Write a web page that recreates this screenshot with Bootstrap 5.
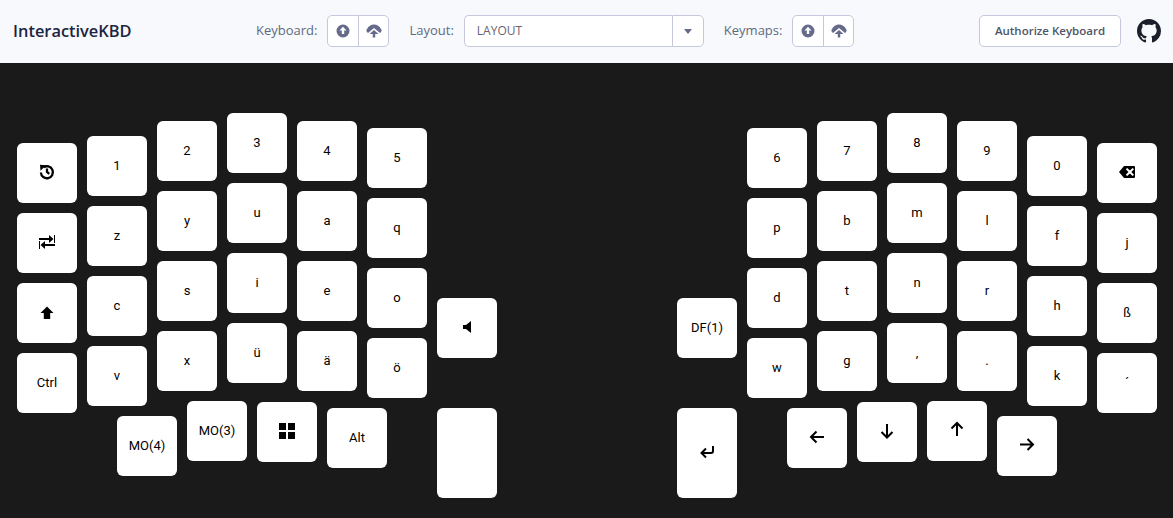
<!DOCTYPE html>
<html lang="en">
<head>
    <meta charset="UTF-8">
    <meta name="viewport" content="width=device-width, initial-scale=1.0">
    <title>InteractiveKBD</title>
    <link href="https://cdn.jsdelivr.net/npm/bootstrap@5.3.0/dist/css/bootstrap.min.css" rel="stylesheet">
    <style>
        body {
            background-color: #1a1a1a;
            height: 518px;
            overflow: hidden;
            font-family: "Open Sans", sans-serif;
        }

        /* Top bar */
        .top-bar {
            height: 63px;
            background-color: #f8f9fc;
            padding: 0 12px 1px 13px;
        }

        .brand-name {
            width: 243px;
            font-size: 16.4px;
            font-weight: 600;
            color: #1b2440;
        }

        .field-label {
            font-size: 13px;
            color: #5f6a80;
            margin-right: 10px;
        }

        .tool-group {
            height: 32px;
            margin-right: 20px;
        }

        .tool-btn {
            width: 31.5px;
            height: 32px;
            padding: 0;
            background-color: #fff;
            border: 1px solid #c5c8dc;
            border-radius: 5px;
            display: flex;
            align-items: center;
            justify-content: center;
        }

        .tool-btn svg {
            width: 24px;
            height: 24px;
            fill: #666b8c;
        }

        .layout-box {
            width: 240px;
            height: 32px;
            margin-right: 20px;
        }

        .layout-text {
            flex: 1;
            height: 32px;
            font-size: 12px;
            color: #6b6470;
            padding: 0 12px;
            line-height: 30px;
            background-color: #fff;
            border: 1px solid #c5c8dc;
            border-right: 0;
            border-radius: 5px 0 0 5px;
        }

        .layout-caret {
            width: 32px;
            border-radius: 0 5px 5px 0;
        }

        .layout-caret span {
            border-top: 5px solid #666b8c;
            border-left: 4.5px solid transparent;
            border-right: 4.5px solid transparent;
        }

        .auth-btn {
            width: 142px;
            height: 32px;
            padding: 0;
            font-size: 11.5px;
            font-weight: 600;
            color: #4d5568;
            background-color: #fff;
            border: 1px solid #c5c8dc;
            border-radius: 5px;
        }

        .gh-link {
            margin-left: 16px;
            line-height: 0;
        }

        .gh-link svg {
            width: 24px;
            height: 24px;
            fill: #1b1f2a;
        }

        /* Keyboard canvas */
        .key-canvas {
            position: relative;
            height: 455px;
        }

        .kbd-key {
            position: absolute;
            width: 60px;
            height: 60px;
            background-color: #fff;
            border-radius: 6px;
            display: flex;
            align-items: center;
            justify-content: center;
            font-family: Roboto, sans-serif;
            font-size: 13px;
            font-weight: 450;
            color: #000;
        }

        .kbd-key.tall {
            height: 90px;
        }

        /* icons are drawn 1:1 in a 24px box centred on the key */
        .kbd-key svg {
            width: 24px;
            height: 24px;
            fill: #000;
        }

        .kbd-key svg .line {
            fill: none;
            stroke: #000;
            stroke-width: 2;
        }

        .kbd-key svg .ring {
            stroke-width: 2.3;
        }
    </style>
</head>
<body>

<!-- Top bar -->
<nav class="top-bar d-flex align-items-center">
    <div class="brand-name">InteractiveKBD</div>

    <span class="field-label">Keyboard:</span>
    <div class="btn-group tool-group">
        <button class="btn tool-btn" type="button"><svg viewBox="0 0 24 24"><path fill-rule="evenodd" d="M12 5.500a6.500 6.500 0 1 1 0 13 6.500 6.500 0 0 1 0-13zm0 2.300-3.500 3.800h2.300v3.500h2.400v-3.500h2.300z"/></svg></button>
        <button class="btn tool-btn" type="button"><svg viewBox="0 0 24 24"><path d="M12 5.500c3 0 5.500 1.500 7 4.500.8 1 .8 2 0 3l-1 1-6-5-6 5-1-1c-.8-1-.8-2 0-3 1.500-3 4-4.500 7-4.500z"/><path d="M12 11l4.500 4h-3.300v3.500h-2.400V15H7.500z"/></svg></button>
    </div>

    <span class="field-label">Layout:</span>
    <div class="d-flex layout-box">
        <div class="layout-text">LAYOUT</div>
        <button class="btn tool-btn layout-caret" type="button"><span></span></button>
    </div>

    <span class="field-label">Keymaps:</span>
    <div class="btn-group tool-group">
        <button class="btn tool-btn" type="button"><svg viewBox="0 0 24 24"><path fill-rule="evenodd" d="M12 5.500a6.500 6.500 0 1 1 0 13 6.500 6.500 0 0 1 0-13zm0 2.300-3.500 3.800h2.300v3.500h2.400v-3.500h2.300z"/></svg></button>
        <button class="btn tool-btn" type="button"><svg viewBox="0 0 24 24"><path d="M12 5.500c3 0 5.500 1.500 7 4.500.8 1 .8 2 0 3l-1 1-6-5-6 5-1-1c-.8-1-.8-2 0-3 1.500-3 4-4.500 7-4.500z"/><path d="M12 11l4.500 4h-3.300v3.500h-2.400V15H7.500z"/></svg></button>
    </div>

    <button class="btn auth-btn ms-auto" type="button">Authorize Keyboard</button>
    <a class="gh-link" href="#"><svg viewBox="0 0 16 16"><path d="M8 0C3.580 0 0 3.580 0 8c0 3.540 2.290 6.530 5.470 7.590.4.070.55-.17.55-.38 0-.19-.01-.82-.01-1.490-2.010.37-2.530-.49-2.690-.94-.09-.23-.48-.94-.82-1.130-.28-.15-.68-.52-.01-.53.63-.01 1.080.58 1.230.82.72 1.210 1.870.87 2.330.66.070-.52.28-.87.51-1.070-1.780-.2-3.640-.89-3.640-3.950 0-.87.31-1.590.82-2.150-.08-.2-.36-1.020.08-2.120 0 0 .67-.21 2.200.82.64-.18 1.320-.27 2-.27.68 0 1.360.09 2 .27 1.530-1.040 2.200-.82 2.200-.82.44 1.100.16 1.920.08 2.120.51.56.82 1.270.82 2.150 0 3.070-1.870 3.750-3.650 3.950.29.25.54.73.54 1.480 0 1.070-.01 1.930-.01 2.200 0 .21.15.46.55.38A8.013 8.013 0 0 0 16 8c0-4.420-3.580-8-8-8z"/></svg></a>
</nav>

<!-- Keys are placed on a free canvas from the layout data below -->
<main class="key-canvas" id="keyCanvas"></main>

<script src="https://cdn.jsdelivr.net/npm/bootstrap@5.3.0/dist/js/bootstrap.bundle.min.js"></script>
<script>
const icons = {
    restore: '<path class="line ring" d="M8.500 6.300a6 6 0 1 1-2.600 5.200M12 7.500v3.500l2.300 1.800"/><path d="M5 3.800l6 .5-5.500 5.500z"/>',
    swap: '<path d="M4 7h10V4l4.500 4-4.500 4V9H4zM19 4h1v8h-1zM20 13H10v-3l-4.500 4 4.500 4v-3h10zM4 10h1v8H4z"/>',
    shift: '<path d="M12 5.500l6.500 6.500h-3.300v6H8.800v-6H5.500z"/>',
    windows: '<path d="M4 3h7v7H4zM13 3h7v7h-7zM4 12h7v7H4zM13 12h7v7h-7z"/>',
    speaker: '<path d="M8 9h3l5-4v12l-5-4H8z"/>',
    backspace: '<path fill-rule="evenodd" d="M9 5h10a1 1 0 0 1 1 1v10a1 1 0 0 1-1 1H9l-5-6zm1.800 3.300l2.700 2.700-2.700 2.700 1.400 1.400 2.700-2.700 2.700 2.700 1.400-1.400-2.700-2.700 2.700-2.700-1.400-1.400-2.700 2.700-2.700-2.700z"/>',
    enter: '<path class="line" d="M18 5v5a2 2 0 0 1-2 2H6.500M11 7.500L6.500 12l4.500 4.500"/>',
    left: '<path class="line" d="M19 11H6.500M11.500 5.500L6 11l5.500 5.500"/>',
    right: '<path class="line" d="M5 10.500h12.500M12.500 5l5.500 5.500-5.500 5.500"/>',
    up: '<path class="line" d="M12 17V4.500M6.500 9.500L12 4l5.500 5.500"/>',
    down: '<path class="line" d="M12 4v12.500M6.500 12l5.500 5.500 5.500-5.500"/>'
};

// x, top of the column, then the four keys from top to bottom
const columns = [
    [17, 143, ['icon:restore', 'icon:swap', 'icon:shift', 'Ctrl']],
    [87, 136, ['1', 'z', 'c', 'v']],
    [157, 121, ['2', 'y', 's', 'x']],
    [227, 113, ['3', 'u', 'i', 'ü']],
    [297, 121, ['4', 'a', 'e', 'ä']],
    [367, 128, ['5', 'q', 'o', 'ö']],
    [747, 128, ['6', 'p', 'd', 'w']],
    [817, 121, ['7', 'b', 't', 'g']],
    [887, 113, ['8', 'm', 'n', ',']],
    [957, 121, ['9', 'l', 'r', '.']],
    [1027, 136, ['0', 'f', 'h', 'k']],
    [1097, 143, ['icon:backspace', 'j', 'ß', '´']]
];

// the thumb clusters and single keys
const extras = [
    [437, 298, 'icon:speaker'],
    [117, 416, 'MO(4)'],
    [187, 401, 'MO(3)'],
    [257, 402, 'icon:windows'],
    [327, 408, 'Alt'],
    [437, 408, '', true],
    [677, 298, 'DF(1)'],
    [677, 408, 'icon:enter', true],
    [787, 408, 'icon:left'],
    [857, 402, 'icon:down'],
    [927, 401, 'icon:up'],
    [997, 416, 'icon:right']
];

const keyCanvas = document.getElementById('keyCanvas');

function addKey(x, y, label, tall) {
    let key = document.createElement('div');
    key.className = tall ? 'kbd-key tall' : 'kbd-key';
    key.style.left = x + 'px';
    key.style.top = (y - 63) + 'px';
    if (label.startsWith('icon:')) {
        key.innerHTML = '<svg viewBox="0 0 24 24">' + icons[label.slice(5)] + '</svg>';
    } else {
        key.textContent = label;
    }
    keyCanvas.appendChild(key);
}

columns.forEach(([x, top, labels]) => {
    labels.forEach((label, i) => addKey(x, top + i * 70, label));
});

extras.forEach(([x, y, label, tall]) => addKey(x, y, label, tall));
</script>

</body>
</html>
